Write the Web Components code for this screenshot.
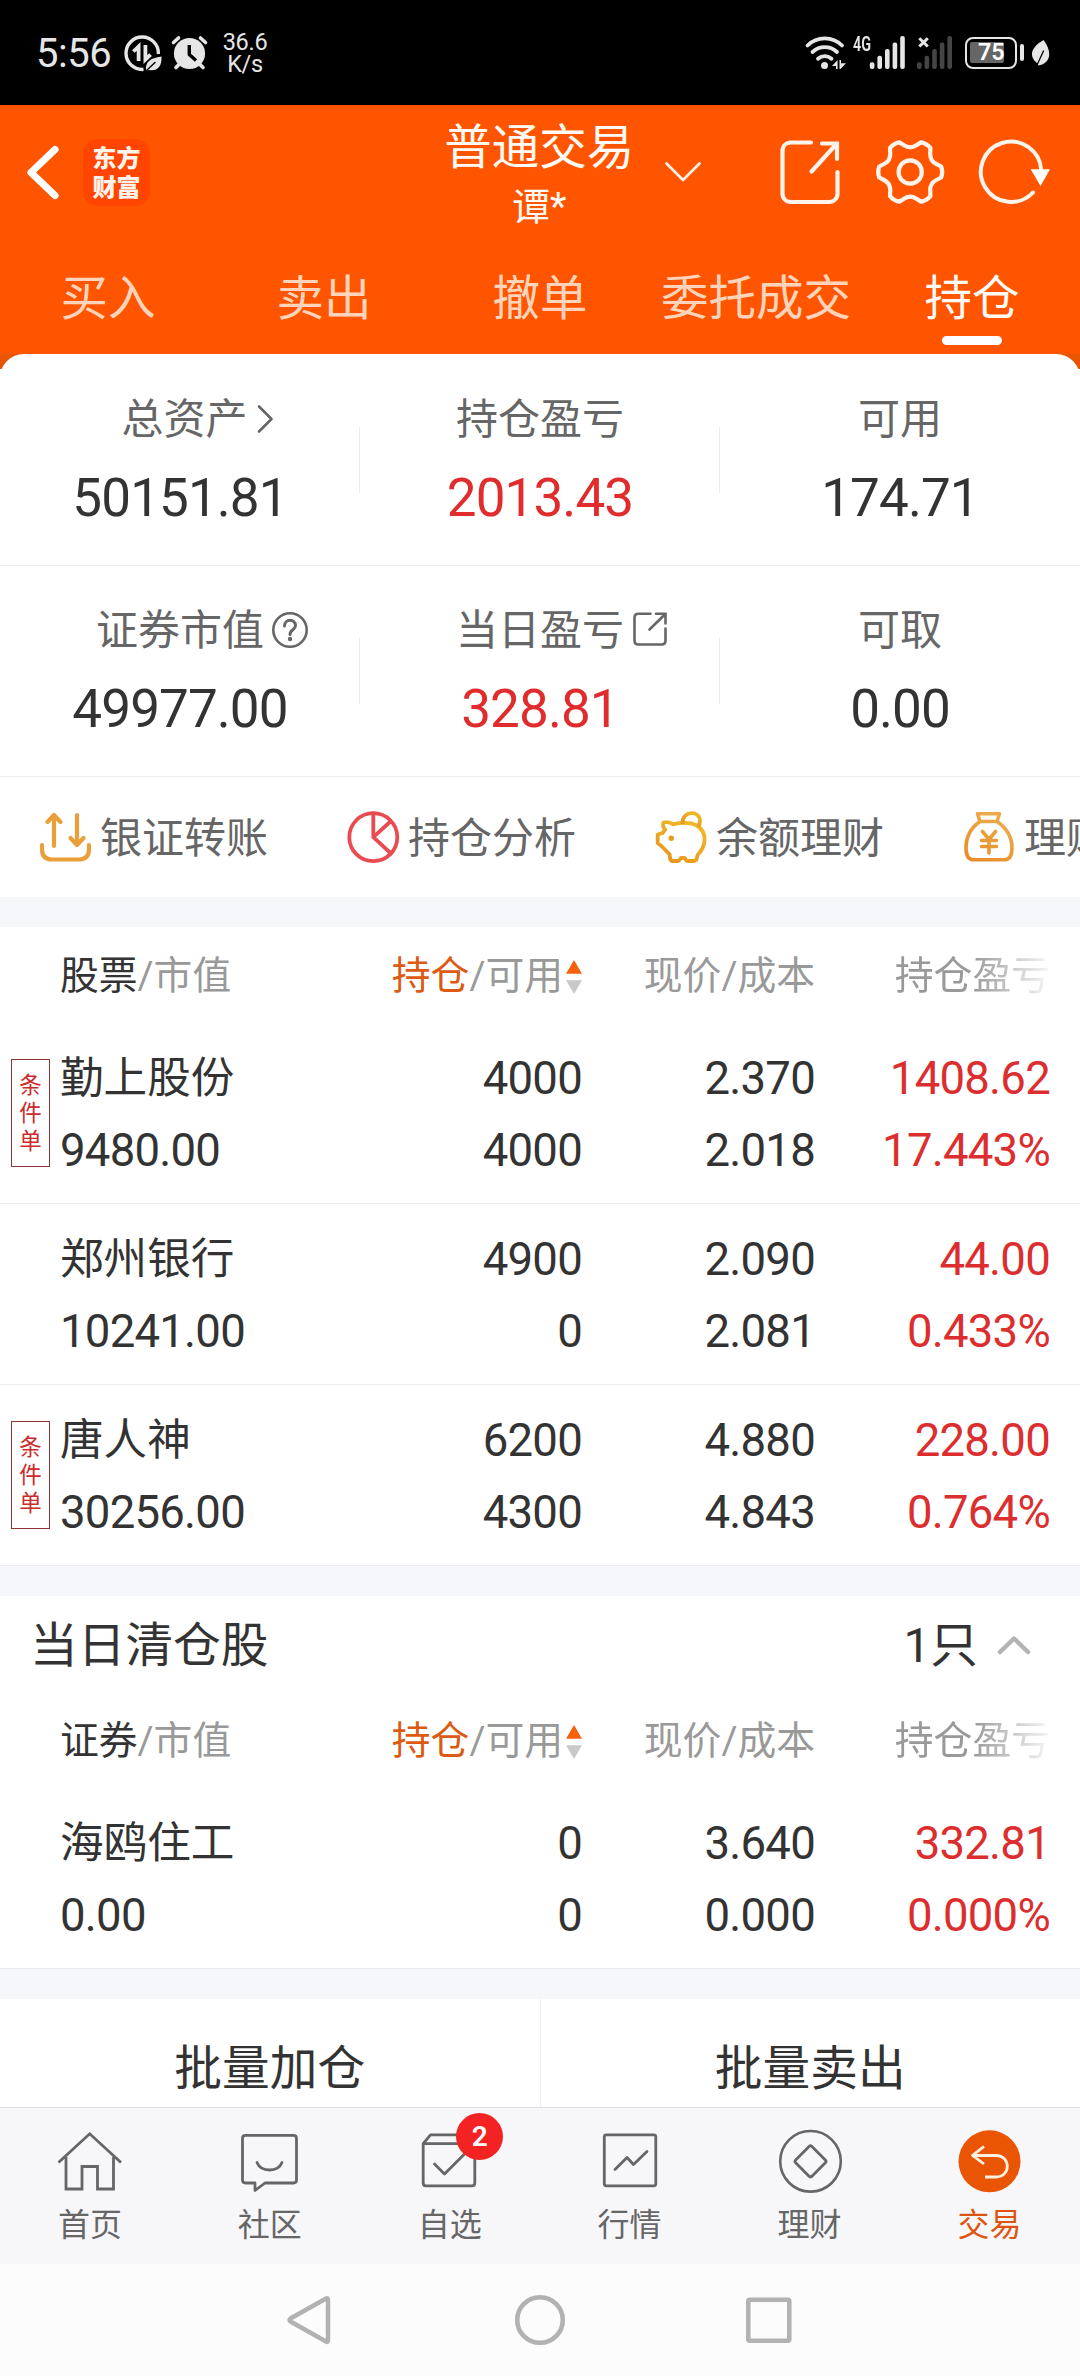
<!DOCTYPE html>
<html lang="zh-CN">
<head>
<meta charset="utf-8">
<title>普通交易</title>
<style>
  html, body { margin: 0; padding: 0; background: #fcfcfc; }
  body { width: 1080px; height: 2376px; overflow: hidden; font-family: Roboto, "Noto Sans CJK SC", sans-serif; color: #333; }
</style>
</head>
<body>
<trade-app></trade-app>
<script>
const svg = (x, y, w, h, body, attrs = '') =>
  `<svg xmlns="http://www.w3.org/2000/svg" width="${w}" height="${h}" viewBox="${x} ${y} ${w} ${h}" fill="none" stroke-linecap="round" stroke-linejoin="round" ${attrs}>${body}</svg>`;

function gearPath(cx, cy) {
  // six lobes: flat outer tips joined by inward curved valleys
  const p = (r, deg) => {
    const a = deg * Math.PI / 180;
    return (cx + r * Math.cos(a)).toFixed(1) + ' ' + (cy + r * Math.sin(a)).toFixed(1);
  };
  let d = '';
  for (let i = 0; i < 6; i++) {
    const c = i * 60;
    d += (i ? 'L' : 'M') + p(31.5, c - 10) + 'Q' + p(33, c) + ' ' + p(31.5, c + 10);
    d += 'L' + p(27.4, c + 17) + 'Q' + p(22.6, c + 30) + ' ' + p(27.4, c + 43);
  }
  return d + 'Z';
}

const bars = (x, color) => [62.3, 55.7, 49, 42.4, 36].map((t, i) =>
  `<rect x="${x + i * 7.6}" y="${t}" width="4.6" height="${69 - t}" rx="2" fill="${color}"/>`).join('');

const ICONS = {
  saver: svg(122, 33, 40, 40, `<path d="M143.500 69.400A16.200 16.200 0 1 1 158.400 54" stroke="#e6e6e6" stroke-width="3.400" stroke-linecap="butt"/>
    <path d="M138.600 61V46.500L133.400 51.500M145.400 45V59.500L150.600 54.600" stroke="#e6e6e6" stroke-width="3.800" stroke-linejoin="miter" stroke-linecap="butt"/>
    <path d="M146 71C145 62 150 58 161.500 56.500C162 67 157 71.500 149 70Z" fill="#e6e6e6"/><path d="M146 71L155 62.500" stroke="#000" stroke-width="1.400"/>`),
  alarm: svg(170, 33, 40, 40, `<circle cx="189.500" cy="53.500" r="15.600" fill="#e6e6e6"/><path d="M173.500 42.500L178.500 38M205.500 42.500L200.500 38M179.500 64L176 67.500M199.500 64L203 67.500" stroke="#e6e6e6" stroke-width="3.600"/><path d="M189.300 45V54.500L196 60.500" stroke="#000" stroke-width="3.400" stroke-linecap="butt"/>`),
  wifi: svg(802, 33, 46, 40, `<path d="M805.500 45.500C815 36 830.500 36 840 45.500M810.500 52C817.500 45.500 828 45.500 835 52M816 58.800C820 55.300 825.500 55.300 829.500 58.800" stroke="#e6e6e6" stroke-width="3.800"/><circle cx="822.500" cy="65.600" r="3.500" fill="#e6e6e6"/><path d="M830 66L835.600 60V69H834V66ZM837.500 60V69L838.500 69L844 63.300H839V60Z" fill="#e6e6e6"/>`),
  signal: svg(868, 33, 40, 40, bars(869.8, '#e6e6e6')),
  nosignal: svg(914, 33, 40, 40, bars(917, '#454545') + '<path d="M919.300 38.200L927.800 46.500M927.800 38.200L919.300 46.500" stroke="#e6e6e6" stroke-width="3" stroke-linecap="butt"/>'),
  leaf: svg(1030, 38, 21, 30, `<path d="M1043.500 40C1050.500 49 1050.500 57 1046.500 61.500C1043.500 64.500 1041 65 1038.500 65.500L1037 63C1028 56 1031.500 47 1043.500 40Z" fill="#e6e6e6"/><path d="M1037 65L1043.500 51" stroke="#000" stroke-width="1.300"/>`),
  back: svg(24, 142, 38, 61, '<path d="M55 149.500L31 172.500L55 195.500" stroke="#fff" stroke-width="7.200"/>'),
  down: svg(664, 158, 40, 26, '<path d="M667.500 162.500L684 179L700.500 162.500" stroke="#fff4ec" stroke-width="2.600"/>'),
  share: svg(778, 138, 64, 68, `<path d="M811 142.500H791C786 142.500 782.500 146 782.500 151V193.500C782.500 198.500 786 202 791 202H829C834 202 837.500 198.500 837.500 193.500V172" stroke="#fff4ec" stroke-width="4.200"/><path d="M822 143.500H837V159M836 144.500L811.500 171.500" stroke="#fff4ec" stroke-width="4.200" stroke-linejoin="miter"/>`),
  gear: svg(874, 138, 72, 68, `<path d="${gearPath(910.200, 172)}" stroke="#fff4ec" stroke-width="4.200"/><circle cx="910.200" cy="172" r="11.600" stroke="#fff4ec" stroke-width="4.200"/>`),
  refresh: svg(977, 138, 74, 68, `<path d="M1033 192.500A30.200 30.200 0 1 1 1041.200 170" stroke="#fff4ec" stroke-width="4"/><path d="M1030.700 169.200H1050L1040.500 186Z" fill="#fff"/>`),
  right: svg(256, 402, 19, 32, '<path d="M259 405.500L271.500 418L259 430.500" stroke="#666" stroke-width="2.600"/>'),
  help: svg(271, 610, 38, 38, '<circle cx="290" cy="629" r="16.700" stroke="#666" stroke-width="2.600"/><path d="M284.500 625C284.500 617.500 295.500 617.500 295.500 624.500C295.500 629 290 628.500 290 633.500" stroke="#666" stroke-width="3"/><circle cx="290" cy="638" r="2.200" fill="#666"/>'),
  open: svg(632, 611, 37, 36, '<path d="M650.500 613.700H638.500Q634.500 613.700 634.500 617.700V640.500Q634.500 644.500 638.500 644.500H661.500Q665.500 644.500 665.500 640.500V628.500" stroke="#666" stroke-width="2.600"/><path d="M656 613.700H665.500V623.500M665 614.200L649.500 629.500" stroke="#666" stroke-width="2.600" stroke-linejoin="miter"/>'),
  transfer: svg(38, 809, 54, 54, '<g stroke="#eaa03a" stroke-width="4.200"><path d="M54 845V814M47.500 821L54 814L60.500 821M77 814V843.500M70.500 837L77 844L83.500 837M42 844V848Q42 858.500 52 858.500H79Q89 858.500 89 848V844"/></g>'),
  pie: svg(346, 809, 54, 54, '<g stroke="#e94b50" stroke-width="3.800"><circle cx="373.300" cy="836.200" r="24"/><path d="M373.300 812.500V836.200L391 852.500M373.300 836.200L390.500 820.500"/></g>'),
  pig: svg(654, 809, 54, 54, `<defs><linearGradient id="g" x1="0" y1="1" x2=".6" y2="0"><stop offset="0" stop-color="#e8921c"/><stop offset="1" stop-color="#edb726"/></linearGradient></defs><g stroke="url(#g)" stroke-width="3.800"><path d="M665.300 828.500C663 826.500 662.500 824 663.500 821.500C668 820.500 670.500 821.500 673 823.300C680 821.500 690 821.200 696 824C703 828 705 834 704.500 840C704 847 700.500 851 697.500 854C697 859 696 860 693 860H687.500C685.500 860 685.500 857 684.500 857H681.500C680 857 680 860 678 860H672.500C670 860 670 857 669.700 853.500L662 845.500L657.700 842V833.500L662.500 832Z"/><path d="M682.500 821.500C682.500 809.500 700.500 809 700 820.500L699 824.500"/></g><circle cx="671.300" cy="837.300" r="2.700" fill="#e89a1c"/>`),
  bag: svg(962, 809, 54, 54, `<defs><linearGradient id="b" x1="0" y1="1" x2=".5" y2="0"><stop offset="0" stop-color="#e98a28"/><stop offset="1" stop-color="#ecaa4a"/></linearGradient></defs><g stroke="url(#b)" stroke-width="3.600"><path d="M980 820.500L977.500 812.800H999.500L997 820.500ZM980 820.500C969 828 966 838 966 847C966 855 969 858.800 974 858.800H1004C1009 858.800 1012 855 1012 847C1012 838 1008 828 997 820.500M982.500 830.500L989 838.500L995.500 830.500M989 838.500V852M981.500 839.500H996.500M981.500 845.500H996.500"/></g>`),
  sort: svg(564, 958, 18, 37, '<path d="M573 960L581 973.800H565Z" fill="#f6610f"/><path d="M565 980.200H581L573 994Z" fill="#c9c9c9"/>'),
  up: svg(996, 1632, 36, 24, '<path d="M1000 1651L1014 1637.500L1028 1651" stroke="#b3b3b3" stroke-width="4.500"/>'),
  home: svg(54, 2128, 72, 66, '<path d="M58.500 2162.500L89.700 2133.800L121 2162.500M66 2157V2189H82V2166.500H97.500V2189H113.500V2157" stroke="#666" stroke-width="2.800" stroke-linejoin="miter" stroke-linecap="butt"/>'),
  chat: svg(234, 2128, 72, 66, '<path d="M245.500 2135.300H293.500Q296.500 2135.300 296.500 2138.300V2180Q296.500 2183 293.500 2183H265L255 2190.500V2183H245.500Q242.500 2183 242.500 2180V2138.300Q242.500 2135.300 245.500 2135.300Z" stroke="#666" stroke-width="2.800"/><path d="M257 2162.500C261 2172.500 278 2172.500 282 2162.500" stroke="#666" stroke-width="2.800"/>'),
  fav: svg(414, 2128, 72, 66, '<path d="M423.200 2143.700L430.500 2134.800H468L474.800 2143.700V2183Q474.800 2185.800 472 2185.800H426Q423.200 2185.800 423.200 2183ZM423.200 2143.700H474.800M434.500 2164L444.500 2174L464 2154.500" stroke="#666" stroke-width="2.800"/>'),
  quote: svg(593, 2128, 72, 66, '<rect x="603.300" y="2134.800" width="51.500" height="51" rx="2" stroke="#666" stroke-width="2.800"/><path d="M614 2169.500L626 2157.500L632.500 2164.500L646 2151.500" stroke="#666" stroke-width="2.800"/>'),
  wealth: svg(773, 2128, 72, 66, '<circle cx="809.500" cy="2161.300" r="30.300" stroke="#666" stroke-width="2.600"/><rect x="798" y="2149.800" width="23" height="23" rx="2" transform="rotate(45 809.500 2161.300)" stroke="#666" stroke-width="2.800"/>'),
  trade: svg(953, 2128, 72, 66, '<circle cx="989.500" cy="2161.300" r="31" fill="#ea5504"/><path d="M984 2146.500L972.500 2155.300L984 2164M973 2155.500H996C1011 2155.500 1011 2177 996 2177H985" stroke="#fff0e4" stroke-width="2.800" stroke-linecap="butt"/>'),
  navBack: svg(284, 2292, 49, 56, '<path d="M326 2298.500Q328 2297.500 328 2300V2340Q328 2342.800 326 2341.500L290.500 2321.500Q288.500 2320 290.500 2318.500Z" stroke="#b2b2b2" stroke-width="4.500"/>'),
  navHome: svg(512, 2292, 56, 56, '<circle cx="540" cy="2320" r="22.800" stroke="#b2b2b2" stroke-width="4.600"/>'),
  navRecent: svg(743, 2292, 52, 56, '<rect x="748.300" y="2299.700" width="41" height="41" rx="1.500" stroke="#b2b2b2" stroke-width="4.600"/>')
};

function define(name, css, html) {
  customElements.define(name, class extends HTMLElement {
    constructor() {
      super();
      this.attachShadow({ mode: 'open' });
    }
    connectedCallback() {
      const body = typeof html === 'function' ? html(k => this.getAttribute(k) || '', this) : html;
      this.shadowRoot.innerHTML = `<style>*{box-sizing:border-box}${css}</style>${body}`;
    }
  });
}

define('ui-icon', ':host{display:block;flex:none;line-height:0}svg{display:block}', a => ICONS[a('name')]);

define('status-bar', `
  :host{display:flex;height:105px;background:#000;color:#e6e6e6;align-items:flex-start;padding:33px 29px 0 36px;box-sizing:border-box}
  .time{font-size:40px;line-height:42px;letter-spacing:-.5px;width:86px}
  .rate{font-size:23.500px;line-height:21.500px;text-align:center;width:48px;margin:-1px 0 0 11px;letter-spacing:-.3px}
  .fill{flex:1}
  .g{font-size:20px;line-height:22px;font-weight:600;width:20px;display:block;transform:scaleX(.72);transform-origin:0 0;margin-left:3px}
  .batt{width:52.500px;height:32px;margin:3.500px 0 0 10.500px;border:2.500px solid #e6e6e6;border-radius:8px;padding:3.500px;display:flex}
  .lvl{width:34px;background:#666;border-radius:2px;color:#fff;font-weight:600;font-size:23.500px;line-height:21px;padding-left:8px;white-space:nowrap;letter-spacing:-.3px}
  .cap{width:4px;height:17px;border-radius:2px;background:#e6e6e6;margin:11px 6.500px 0 2.500px}
  .leaf{margin-top:5px}`,
  `<div class="time">5:56</div><ui-icon name="saver"></ui-icon><ui-icon name="alarm" style="margin-left:8px"></ui-icon><div class="rate">36.6<br>K/s</div>
   <div class="fill"></div><ui-icon name="wifi"></ui-icon><span class="g">4G</span><ui-icon name="signal" style="margin-left:-5px"></ui-icon><ui-icon name="nosignal" style="margin-left:6px"></ui-icon>
   <div class="batt"><div class="lvl">75</div></div><div class="cap"></div><ui-icon class="leaf" name="leaf"></ui-icon>`);

define('brand-logo', `
  :host{display:flex;flex-direction:column;align-items:center;justify-content:center;width:67px;height:67px;border-radius:15px;background:#ff4500;color:#fff3ec;
    font:900 24px/29px "Noto Sans CJK SC",sans-serif;box-sizing:border-box;padding-bottom:3px}`, '<div>东方</div><div>财富</div>');

define('title-bar', `
  :host{display:flex;height:134px;color:#fffaf5;align-items:center;padding:0 29px 0 24px;box-sizing:border-box}
  .side{display:flex;align-items:center;width:416px;gap:21px}
  .mid{width:200px;text-align:center;padding-top:2px;height:134px;white-space:nowrap}
  .t{font-size:47.500px;line-height:60px;margin-top:11px}
  .s{font-size:38px;line-height:58px}
  .acts{display:flex;align-items:center;margin-left:75px}`,
  `<div class="side"><ui-icon name="back"></ui-icon><brand-logo></brand-logo></div><div class="mid"><div class="t">普通交易</div><div class="s">谭*</div></div>
   <ui-icon name="down" style="margin-left:24px"></ui-icon><div class="acts"><ui-icon name="share"></ui-icon><ui-icon name="gear" style="margin-left:32px"></ui-icon><ui-icon name="refresh" style="margin-left:31px"></ui-icon></div>`);

define('trade-tab', `
  :host{display:flex;flex-direction:column;align-items:center;flex:1;color:#ffd4bb;font-size:47.500px;line-height:60px;white-space:nowrap}
  :host([active]){color:#fffaf5}
  i{display:none;width:60px;height:9px;border-radius:4.500px;background:#fff;margin-top:7px}
  :host([active]) i{display:block}`, '<slot></slot><i></i>');

define('top-header', `
  :host{display:block;height:249px;background:#ff5500}
  nav{display:flex;padding-top:30px}`,
  `<title-bar></title-bar><nav><trade-tab>买入</trade-tab><trade-tab>卖出</trade-tab><trade-tab>撤单</trade-tab><trade-tab>委托成交</trade-tab><trade-tab active>持仓</trade-tab></nav>`);

define('stat-cell', `
  :host{display:flex;flex:1;flex-direction:column;align-items:center;position:relative}
  :host(:not(:last-child)) .bar{position:absolute;right:0;top:73px;width:1px;height:66px;background:#ebebeb}
  .l{display:flex;align-items:center;height:50px;margin-top:41px;font-size:42px;line-height:50px;color:#666}
  .v{font-size:53px;line-height:60px;letter-spacing:-.9px;margin-top:23px;color:#333}
  :host([red]) .v{color:#e02c2c}`,
  a => `<div class="l">${a('label')}<slot></slot></div><div class="v">${a('value')}</div><div class="bar"></div>`);

define('asset-panel', `
  :host{display:block;background:linear-gradient(#e85500 0 15px,#fff 15px)}
  .card{background:#fff;border-radius:24px 24px 0 0}
  .row{display:flex;height:212px;border-bottom:1px solid #ececec}
  .row+.row{height:211px}
  .row+.row stat-cell{margin-top:-1px}`,
  `<div class="card"><div class="row"><stat-cell label="总资产" value="50151.81"><ui-icon name="right" style="margin:-2px -36px 0 8px"></ui-icon></stat-cell>
    <stat-cell label="持仓盈亏" value="2013.43" red></stat-cell><stat-cell label="可用" value="174.71"></stat-cell></div>
   <div class="row"><stat-cell label="证券市值" value="49977.00"><ui-icon name="help" style="margin:-3px -45px 0 7px"></ui-icon></stat-cell>
    <stat-cell label="当日盈亏" value="328.81" red><ui-icon name="open" style="margin:-4px -45px 0 8px"></ui-icon></stat-cell><stat-cell label="可取" value="0.00"></stat-cell></div></div>`);

define('quick-link', `
  :host{display:flex;align-items:center;flex:none;width:308px;gap:8px;font-size:42px;line-height:60px;color:#666;white-space:nowrap}
  span{padding-top:3px}`,
  a => `<ui-icon name="${a('icon')}"></ui-icon><span><slot></slot></span>`);

define('quick-links', ':host{display:flex;height:120px;background:#fff;padding-left:38px;overflow:hidden;box-sizing:border-box}',
  `<quick-link icon="transfer">银证转账</quick-link><quick-link icon="pie">持仓分析</quick-link><quick-link icon="pig">余额理财</quick-link><quick-link icon="bag">理财</quick-link>`);

define('section-gap', ':host{display:block;height:30px;background:#f6f7fb}', '');

const GRID = 'display:grid;grid-template-columns:322px 200px 233px 235px;padding:0 30px 0 60px;box-sizing:border-box;background:#fff;';

define('table-head', `
  :host{${GRID}height:96px;align-items:center;font-size:38.800px;line-height:60px;color:#999;white-space:nowrap;padding-top:2px}
  div{display:flex;justify-content:flex-end;align-items:center}
  div:first-of-type{justify-content:flex-start}
  b{font-weight:400;color:#333}
  .o{color:#dc5a12}
  .fade{-webkit-mask-image:linear-gradient(90deg,#000 50%,rgba(0,0,0,.08) 100%);mask-image:linear-gradient(90deg,#000 50%,rgba(0,0,0,.08) 100%)}`,
  a => `<div><b>${a('name')}</b>/市值</div><div><b class="o">持仓</b>/可用<ui-icon name="sort" style="margin:0 -1px 0 2px"></ui-icon></div><div>现价/成本</div><div><span class="fade">持仓盈亏</span></div>`);

define('order-tag', `
  :host{display:flex;flex-direction:column;align-items:center;width:39px;height:108px;border:1px solid #8e3434;color:#cc2b2b;font-size:22.500px;line-height:28px;box-sizing:border-box;padding-top:11px;text-align:center}`,
  '<span>条</span><span>件</span><span>单</span>');

define('stock-row', `
  :host{${GRID}height:181px;border-bottom:1px solid #ececec;font-size:45.500px;letter-spacing:-.75px;line-height:72px;padding-top:20px;text-align:right;position:relative;white-space:nowrap}
  .n{text-align:left}
  .n div:first-child{font-size:43.600px;letter-spacing:0}
  .r{color:#dc2e2e}
  order-tag{position:absolute;left:11px;top:36px;letter-spacing:0}`,
  a => {
    const c = a('cells').split('|');
    const col = (cls, x, y) => `<div class="${cls}"><div>${x}</div><div>${y}</div></div>`;
    return col('n', c[0], c[1]) + col('', c[2], c[3]) + col('', c[4], c[5]) + col('r', c[6], c[7]) + (a('tag') ? '<order-tag></order-tag>' : '');
  });

define('section-title', `
  :host{display:flex;height:96px;background:#fff;align-items:center;padding:4px 48px 0 30px;box-sizing:border-box;font-size:47.700px;line-height:60px}
  .f{flex:1}`,
  '<slot></slot><span class="f"></span><span>1只</span><ui-icon name="up" style="margin:-3px 0 0 18px"></ui-icon>');

define('batch-actions', `
  :host{display:flex;height:108px;background:#fff;font-size:47.700px;line-height:140px;overflow:hidden}
  div{flex:1;text-align:center}
  div:first-of-type{border-right:1px solid #f0f0f0}`, '<div>批量加仓</div><div>批量卖出</div>');

define('tab-item', `
  :host{display:flex;flex-direction:column;align-items:center;width:179.900px;padding-top:20px;font-size:32px;line-height:40px;color:#666;position:relative}
  :host([active]){color:#dd5510}
  span{margin-top:11px}
  em{position:absolute;left:96.500px;top:5px;width:47px;height:47px;border-radius:50%;background:#f32323;color:#fff;font:600 28px/47px Roboto,sans-serif;text-align:center}`,
  a => `<ui-icon name="${a('icon')}"></ui-icon><span><slot></slot></span>${a('badge') ? `<em>${a('badge')}</em>` : ''}`);

define('tab-bar', ':host{display:flex;height:157px;background:#f7f7fa;border-top:1px solid #dedede;box-sizing:border-box}',
  `<tab-item icon="home">首页</tab-item><tab-item icon="chat">社区</tab-item><tab-item icon="fav" badge="2">自选</tab-item><tab-item icon="quote">行情</tab-item><tab-item icon="wealth">理财</tab-item><tab-item icon="trade" active>交易</tab-item>`);

define('system-nav', ':host{display:flex;height:112px;background:#fcfcfc;align-items:center;padding-left:284px;box-sizing:border-box}',
  '<ui-icon name="navBack"></ui-icon><ui-icon name="navHome" style="margin-left:179px"></ui-icon><ui-icon name="navRecent" style="margin-left:175px"></ui-icon>');

define('trade-app', ':host{display:flex;flex-direction:column;width:1080px;height:2376px;overflow:hidden}:host>*{flex:none}', `
  <status-bar></status-bar>
  <top-header></top-header>
  <asset-panel></asset-panel>
  <quick-links></quick-links>
  <section-gap></section-gap>
  <table-head name="股票"></table-head>
  <stock-row tag="1" cells="勤上股份|9480.00|4000|4000|2.370|2.018|1408.62|17.443%"></stock-row>
  <stock-row cells="郑州银行|10241.00|4900|0|2.090|2.081|44.00|0.433%"></stock-row>
  <stock-row tag="1" cells="唐人神|30256.00|6200|4300|4.880|4.843|228.00|0.764%"></stock-row>
  <section-gap></section-gap>
  <section-title>当日清仓股</section-title>
  <table-head name="证券"></table-head>
  <stock-row cells="海鸥住工|0.00|0|0|3.640|0.000|332.81|0.000%"></stock-row>
  <section-gap></section-gap>
  <batch-actions></batch-actions>
  <tab-bar></tab-bar>
  <system-nav></system-nav>`);
</script>
</body>
</html>
